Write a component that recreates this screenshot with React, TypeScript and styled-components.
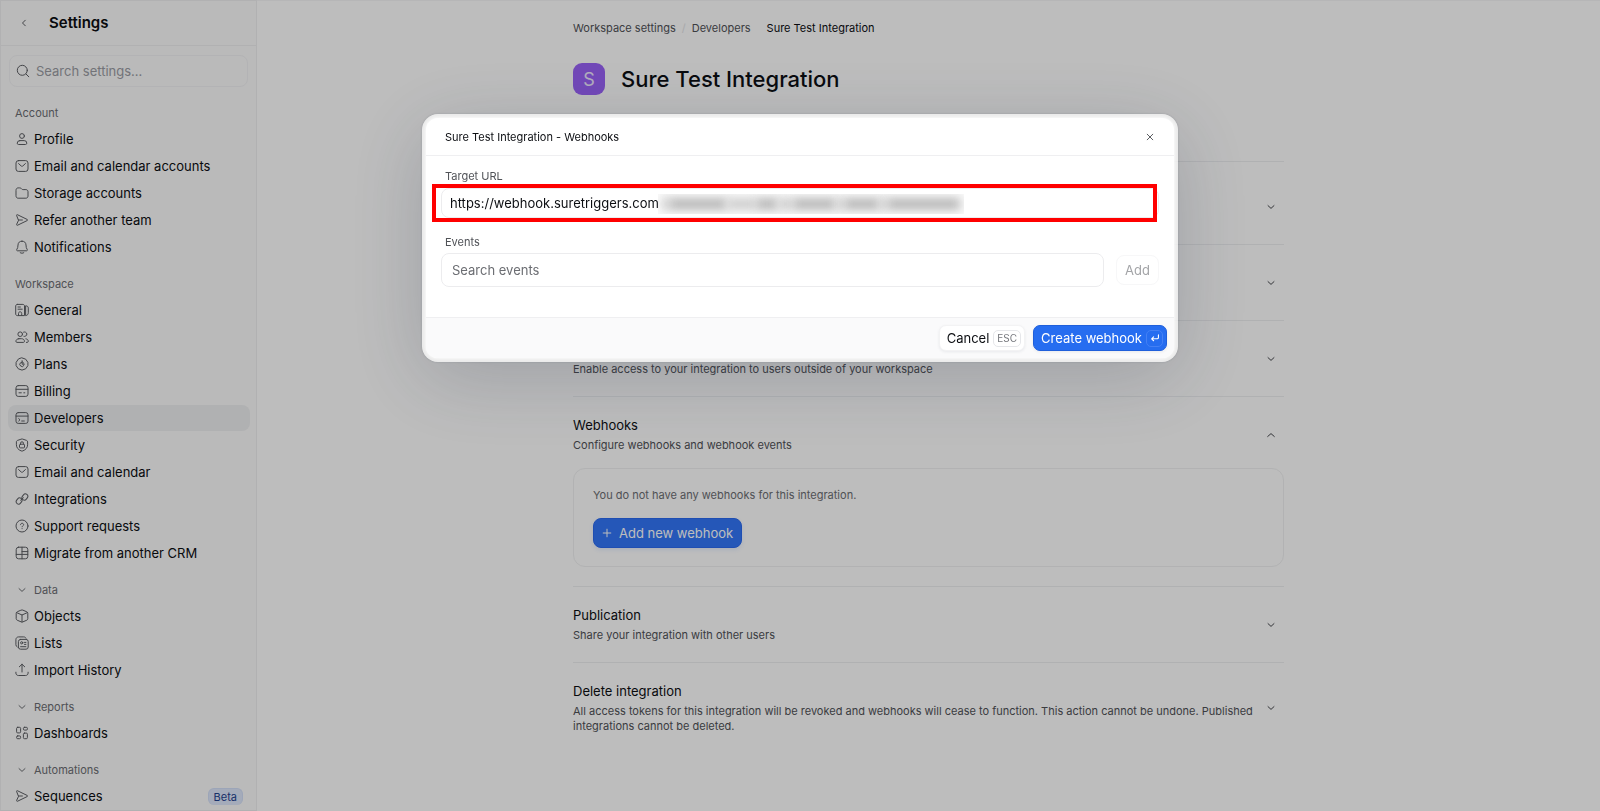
import React from "react";
import styled, { createGlobalStyle, css } from "styled-components";

const GlobalStyle = createGlobalStyle`
  * { box-sizing: border-box; }
  html, body, #root { height: 100%; }
  body {
    margin: 0;
    background: #ffffff;
    color: #0c0e12;
    font-family: Inter, "Liberation Sans", sans-serif;
    font-size: 13px;
    overflow: hidden;
  }
  button, input { font: inherit; color: inherit; }
  button { cursor: pointer; }
  a { color: inherit; text-decoration: none; }
  h1, h2, h3, p, ul, ol { margin: 0; padding: 0; font-weight: inherit; font-size: inherit; }
  ul, ol { list-style: none; }
`;

/* ---------- icons ---------- */

const Svg = styled.svg`
  display: block;
  flex: none;
  fill: none;
  stroke: currentColor;
  stroke-width: 1;
  stroke-linecap: round;
  stroke-linejoin: round;
`;

const shapes = {
  profile: (
    <>
      <circle cx="7" cy="4" r="2.4" />
      <path d="M4.8 8.6h4.4a2.6 2.6 0 0 1 2.6 2.6c0 .8-.6 1.3-1.3 1.3h-7c-.7 0-1.3-.5-1.3-1.3a2.6 2.6 0 0 1 2.6-2.6z" />
    </>
  ),
  mail: (
    <>
      <rect x="1" y="1.6" width="12" height="10.8" rx="2.4" />
      <path d="M3.6 4.6l2.5 2.3c.5.5 1.3.5 1.8 0l2.5-2.3" />
    </>
  ),
  folder: (
    <path d="M1 4c0-1.2.9-2.1 2.1-2.1h1.6c.6 0 1.1.2 1.5.6l.5.5c.4.4.8.6 1.4.6h2.8c1.2 0 2.1.9 2.1 2.1v4.4c0 1.2-.9 2.1-2.1 2.1H3.1C1.9 12.2 1 11.3 1 10.1z" />
  ),
  send: (
    <path d="M3.4 7H7.4M3.4 7L1.6 2.5c-.2-.6.3-1 .8-.8L12.3 6.5c.5.2.5.8 0 1L2.4 12.3c-.5.2-1-.2-.8-.8z" />
  ),
  bell: (
    <>
      <path d="M7 1.2a4 4 0 0 0-4 3.8L2.7 7.6 1.7 9.7c-.2.5.1 1.1.7 1.1h9.2c.6 0 .9-.6.7-1.100l-1-2.100L11 5a4 4 0 0 0-4-3.800z" />
      <path d="M5.200 12.700c1.100.7 2.500.7 3.600 0" />
    </>
  ),
  general: (
    <>
      <path d="M2.300 1.400h5.600c.9 0 1.600.7 1.600 1.600v9.600H2.300c-.9 0-1.600-.7-1.600-1.600V3c0-.9.700-1.600 1.600-1.600z" />
      <path d="M11 2.800c1.400 0 2.300.9 2.300 2.300v4.600c0 1.600-.9 2.700-2.300 2.900z" />
      <path d="M3 4h2.400M3 6.200h4.200M3.500 12.400v-2c0-.9.700-1.600 1.600-1.600s1.600.7 1.600 1.600v2" />
    </>
  ),
  members: (
    <>
      <circle cx="5.200" cy="4.200" r="2.300" />
      <path d="M3.800 8.700h2.800c1.600 0 2.900 1.200 2.900 2.600 0 .6-.5 1.100-1.100 1.100H2c-.6 0-1.100-.5-1.100-1.100 0-1.400 1.300-2.600 2.900-2.600zM8.600 2.100a2.300 2.300 0 1 1 .3 4.300M10.900 8.800c1.400.2 2.400 1.200 2.400 2.500 0 .6-.5 1.100-1.100 1.100h-.8" />
    </>
  ),
  plans: (
    <>
      <path d="M7 .9l3.700 1.300 2.200 3.200v3.200l-2.200 3.200L7 13.100l-3.700-1.300-2.200-3.200V5.400l2.200-3.200z" />
      <path d="M9 6.300A2.200 2.200 0 1 0 9 8.400M7.100 3.700v3.500h2" />
    </>
  ),
  billing: (
    <>
      <rect x="1" y="1.600" width="12" height="10.800" rx="2.200" />
      <path d="M1 5.300h12M4 8.800h2.300M8.800 8.800h1" />
    </>
  ),
  terminal: (
    <>
      <rect x="1" y="1.600" width="12" height="10.800" rx="2.200" />
      <path d="M1 5.100h12M3.700 7.600l1.300 1.200-1.300 1.200M6.700 10h2.600" />
    </>
  ),
  shield: (
    <>
      <path d="M6.300 1.100c.5-.2.900-.2 1.400 0l3.800 1.300c.7.200 1.100.8 1.100 1.500v2.900c0 2.900-1.900 4.900-4.700 6.100-.6.200-1.200.2-1.800 0C3.300 11.700 1.400 9.700 1.400 6.800V3.900c0-.7.400-1.300 1.100-1.500z" />
      <rect x="4.500" y="6.200" width="5" height="3.700" rx=".9" />
      <path d="M5.500 6.200v-.9a1.500 1.500 0 0 1 3 0v.9" />
    </>
  ),
  link: (
    <>
      <rect x="0.900" y="6.600" width="6.400" height="4.800" rx="2.400" transform="rotate(-52 4.100 9)" />
      <rect x="6.700" y="2.600" width="6.400" height="4.800" rx="2.400" transform="rotate(-52 9.900 5)" />
      <path d="M5.600 8.200l2.800-2.400" />
    </>
  ),
  help: (
    <>
      <circle cx="7" cy="7" r="6" />
      <path d="M5.500 5.700c.1-.9.800-1.400 1.600-1.400s1.500.6 1.500 1.400c0 1-1.500 1.100-1.500 2.100M7.100 9.600v.1" />
    </>
  ),
  grid: (
    <>
      <rect x="1.200" y="1.200" width="11.600" height="11.600" rx="2.400" />
      <path d="M7 1.200v11.600M7 5.600h5.800M1.200 8.400h11.600" />
    </>
  ),
  cube: (
    <path d="M6.200 1.100c.5-.2 1.100-.2 1.600 0l4 1.700c.6.300 1 .8 1 1.500v5.400c0 .7-.4 1.200-1 1.500l-4 1.700c-.5.200-1.100.2-1.600 0l-4-1.700c-.6-.3-1-.8-1-1.500V4.300c0-.7.400-1.200 1-1.500zM1.600 3.600L7 6l5.400-2.400M7 6v7" />
  ),
  list: (
    <>
      <rect x="3.400" y="3.400" width="9.800" height="9.800" rx="2.200" />
      <path d="M2.200 11A2.600 2.600 0 0 1 .9 8.700V3.500C.9 2.100 2.100.9 3.500.9h5.200c1 0 1.900.5 2.300 1.300" />
      <circle cx="6.700" cy="6.800" r="1.100" />
      <path d="M9.500 6.400h1.400M9.500 8.400h1.400M5.600 10.700h5.300" />
    </>
  ),
  upload: (
    <path d="M7 9V1.200M4.300 3.800L7 1.200l2.700 2.600M.9 9.200v.9c0 1.300 1.100 2.400 2.400 2.400h7.400c1.300 0 2.400-1.100 2.400-2.400v-.9" />
  ),
  dashboards: (
    <>
      <rect x="1.600" y="1.300" width="4" height="5.600" rx="1.100" />
      <rect x="8.400" y="1.300" width="4" height="2.800" rx="1.100" />
      <rect x="1.600" y="9.900" width="4" height="2.800" rx="1.100" />
      <rect x="8.400" y="7.100" width="4" height="5.600" rx="1.100" />
    </>
  ),
  search: (
    <>
      <circle cx="6.300" cy="6.300" r="5" />
      <path d="M10 10l2.800 2.800" />
    </>
  ),
  left: <path d="M8.300 4.200L5.500 7l2.800 2.800" />,
  down: <path d="M4 5.600l3 2.800 3-2.800" />,
  up: <path d="M3.700 8.500L7 5.600l3.300 2.900" />,
  close: <path d="M4.200 4.200l5.600 5.600M9.800 4.200L4.200 9.800" />,
  plus: <path d="M7 3.200v7.600M3.200 7h7.600" />,
  enter: <path d="M11 3.400v3c0 .9-.6 1.500-1.500 1.500H3.200M5.400 5.600L3.100 7.900l2.300 2.300" strokeWidth="1.300" />,
};

type IconName = keyof typeof shapes;

const Icon = ({ name, size = 14 }: { name: IconName; size?: number }) => (
  <Svg viewBox="0 0 14 14" width={size} height={size} aria-hidden="true">
    {shapes[name]}
  </Svg>
);

/* ---------- shell ---------- */

const Shell = styled.div`
  display: flex;
  height: 100%;
  overflow: hidden;
`;

const Sidebar = styled.nav`
  width: 257px;
  flex: none;
  overflow: hidden;
  background: #fbfbfb;
  border: 1px solid #efeff1;
`;

const SidebarHeader = styled.header`
  display: flex;
  align-items: center;
  gap: 11px;
  height: 45px;
  padding: 0 9px;
  border-bottom: 1px solid #efeff1;
`;

const BackButton = styled.button`
  display: grid;
  place-items: center;
  width: 28px;
  height: 28px;
  padding: 0;
  border: 0;
  background: none;
  color: #5c5e63;
`;

const SidebarTitle = styled.h2`
  font-size: 15px;
  line-height: 18px;
  font-weight: 600;
`;

const SearchBox = styled.label`
  display: flex;
  align-items: center;
  gap: 6px;
  height: 32px;
  margin: 9px 8px 18px;
  padding: 0 6px;
  border: 1px solid #f2f2f4;
  border-radius: 8px;
  color: #5c5e63;
`;

const SearchInput = styled.input`
  flex: 1;
  min-width: 0;
  padding: 0;
  border: 0;
  outline: 0;
  background: none;
  &::placeholder { color: #9a9ca3; opacity: 1; }
`;

const Group = styled.section`
  margin: 0 6px 16px 7px;
`;

const GroupLabel = styled.h3`
  display: flex;
  align-items: center;
  gap: 5px;
  height: 16px;
  margin-bottom: 5px;
  padding: 0 7px;
  font-size: 11px;
  color: #6c6e73;
`;

const NavList = styled.ul`
  display: grid;
  gap: 1px;
`;

const NavLink = styled.a<{ $active?: boolean }>`
  display: flex;
  align-items: center;
  gap: 5px;
  height: 26px;
  padding: 0 7px;
  border-radius: 8px;
  background: ${(p) => (p.$active ? "#eeeff1" : "transparent")};
  svg { color: #5c5e63; }
`;

const Beta = styled.span`
  margin-left: auto;
  padding: 0 5px;
  border: 1px solid #d3dff8;
  border-bottom: 0;
  border-radius: 6px;
  background: #dde7fb;
  color: #1f4390;
  font-size: 11px;
  line-height: 16px;
`;

/* ---------- page ---------- */

const Main = styled.main`
  flex: 1;
  min-width: 0;
  padding: 19px 16px;
  border-top: 1px solid #f6f6f7;
`;

const Column = styled.div`
  max-width: 711px;
  margin: 0 auto;
`;

const Crumbs = styled.ol`
  display: flex;
  gap: 16px;
  font-size: 11px;
  line-height: 16px;
  color: #505257;
`;

const Crumb = styled.li<{ $current?: boolean }>`
  position: relative;
  color: ${(p) => (p.$current ? "#0c0e12" : "inherit")};
  & + &::before {
    content: "/";
    position: absolute;
    left: -10px;
    color: #e3e4e7;
  }
`;

const TitleRow = styled.div`
  display: flex;
  align-items: center;
  gap: 16px;
  margin: 27px 0 66px;
`;

const Avatar = styled.span`
  display: grid;
  place-items: center;
  width: 32px;
  height: 32px;
  border-radius: 9px;
  background: #9a62f9;
  color: #f0eaff;
  font-size: 18px;
`;

const PageTitle = styled.h1`
  font-size: 22px;
  line-height: 32px;
  font-weight: 500;
`;

const Section = styled.section<{ $tall?: boolean }>`
  border-top: 1px solid #eeeff1;
  padding: ${(p) => (p.$tall ? "26px" : "19px")} 0 19px;
`;

const SectionHeader = styled.button`
  display: flex;
  align-items: center;
  justify-content: space-between;
  gap: 8px;
  width: 100%;
  padding: 0 6px 0 0;
  border: 0;
  background: none;
  text-align: left;
  svg { color: #45474c; }
`;

const SectionText = styled.span`
  display: grid;
  gap: 4px;
`;

const SectionTitle = styled.span`
  min-height: 18px;
  line-height: 18px;
`;

const SectionNote = styled.span`
  min-height: 15px;
  font-size: 11px;
  line-height: 15px;
  color: #505257;
`;

const Card = styled.div`
  display: grid;
  justify-items: start;
  gap: 15px;
  margin-top: 15px;
  padding: 18px 19px;
  border: 1px solid #f0f1f2;
  border-radius: 12px;
`;

const CardText = styled.p`
  font-size: 11px;
  line-height: 16px;
  color: #6c6e73;
`;

const primary = css`
  border: 1px solid #1f5fdb;
  background: #266df0;
  color: #ffffff;
`;

const AddWebhook = styled.button`
  ${primary}
  display: flex;
  align-items: center;
  gap: 5px;
  height: 30px;
  padding: 0 8px 0 6px;
  border-color: #2b6af0;
  border-radius: 8px;
  background: #3376f8;
  box-shadow: 0 2px 4px rgba(38, 109, 240, 0.12);
`;

/* ---------- dialog ---------- */

const Overlay = styled.div`
  position: fixed;
  inset: 0;
  display: flex;
  justify-content: center;
  align-items: flex-start;
  padding: 114px 16px 16px;
  background: rgba(0, 0, 0, 0.26);
`;

const Frame = styled.div`
  width: 100%;
  max-width: 756px;
  padding: 4px;
  border-radius: 16px;
  background: rgba(255, 255, 255, 0.68);
  box-shadow: 0 0 2px rgba(28, 40, 64, 0.2), 0 16px 80px rgba(28, 40, 64, 0.2);
`;

const Dialog = styled.div`
  overflow: hidden;
  border-radius: 12px;
  background: #ffffff;
  box-shadow: 0 0 3px 1px rgba(255, 255, 255, 0.8);
`;

const DialogHeader = styled.header`
  display: flex;
  align-items: center;
  justify-content: space-between;
  height: 38px;
  padding: 0 17px 0 19px;
  border-bottom: 1px solid #efeff1;
  font-size: 11px;
`;

const CloseButton = styled.button`
  display: grid;
  padding: 0;
  border: 0;
  background: none;
  color: #5c5e63;
`;

const DialogBody = styled.div`
  padding: 12px 15px 30px;
`;

const FieldLabel = styled.label`
  display: block;
  padding-left: 4px;
  font-size: 11px;
  line-height: 16px;
  color: #505257;
`;

const UrlField = styled.div`
  position: relative;
  margin: 4px 0 16px;
`;

const Highlight = styled.div`
  position: absolute;
  inset: -4px 2px -4px -9px;
  border: 4px solid #ff0000;
  pointer-events: none;
`;

const TextInput = styled.input`
  width: 100%;
  height: 34px;
  padding: 0 10px;
  border: 1px solid #ececee;
  border-radius: 8px;
  outline: 0;
  background: #ffffff;
  &::placeholder { color: #6b6d72; opacity: 1; }
`;

const UrlInput = styled(TextInput)`
  display: block;
  height: 30px;
  padding: 0 8px;
`;

const Redaction = styled.div`
  position: absolute;
  top: 6px;
  left: 217px;
  display: flex;
  width: 306px;
  height: 20px;
  padding: 4px 4px;
  overflow: hidden;
  background: #fafafa;
`;

const Smudge = styled.span<{ $grow: number; $faint: boolean }>`
  flex: ${(p) => p.$grow};
  background: ${(p) => (p.$faint ? "#cfcfcf" : "#b9b9b9")};
  filter: blur(5px);
`;

const EventRow = styled.div`
  display: flex;
  align-items: center;
  gap: 12px;
  margin-top: 3px;
`;

const AddButton = styled.button`
  flex: none;
  width: 43px;
  height: 30px;
  padding: 0;
  border: 1px solid #f7f7f8;
  border-radius: 8px;
  background: #ffffff;
  color: #a3a4a7;
`;

const DialogFooter = styled.footer`
  display: flex;
  justify-content: flex-end;
  gap: 8px;
  padding: 7px;
  border-top: 1px solid #efeff1;
  background: #fafafb;
`;

const FooterButton = styled.button<{ $primary?: boolean }>`
  display: flex;
  align-items: center;
  gap: 4px;
  height: 26px;
  padding: 0 3px 0 7px;
  border: 1px solid #f3f3f4;
  border-radius: 7px;
  background: #ffffff;
  box-shadow: 0 1px 3px rgba(28, 40, 64, 0.08);
  ${(p) => p.$primary && primary}
`;

const KeyCap = styled.kbd<{ $primary?: boolean }>`
  display: grid;
  place-items: center;
  height: 17px;
  min-width: 17px;
  padding: 0 ${(p) => (p.$primary ? "0" : "3px")};
  border: 1px solid ${(p) => (p.$primary ? "#4480f4" : "#e6e7ea")};
  border-radius: 5px;
  color: ${(p) => (p.$primary ? "#ffffff" : "#75777c")};
  font-family: inherit;
  font-size: 10px;
`;

/* ---------- content ---------- */

type Item = { icon: IconName; label: string; active?: boolean; beta?: boolean };
type NavGroup = { label: string; folds?: boolean; items: Item[] };

const groups: NavGroup[] = [
  {
    label: "Account",
    items: [
      { icon: "profile", label: "Profile" },
      { icon: "mail", label: "Email and calendar accounts" },
      { icon: "folder", label: "Storage accounts" },
      { icon: "send", label: "Refer another team" },
      { icon: "bell", label: "Notifications" },
    ],
  },
  {
    label: "Workspace",
    items: [
      { icon: "general", label: "General" },
      { icon: "members", label: "Members" },
      { icon: "plans", label: "Plans" },
      { icon: "billing", label: "Billing" },
      { icon: "terminal", label: "Developers", active: true },
      { icon: "shield", label: "Security" },
      { icon: "mail", label: "Email and calendar" },
      { icon: "link", label: "Integrations" },
      { icon: "help", label: "Support requests" },
      { icon: "grid", label: "Migrate from another CRM" },
    ],
  },
  {
    label: "Data",
    folds: true,
    items: [
      { icon: "cube", label: "Objects" },
      { icon: "list", label: "Lists" },
      { icon: "upload", label: "Import History" },
    ],
  },
  { label: "Reports", folds: true, items: [{ icon: "dashboards", label: "Dashboards" }] },
  { label: "Automations", folds: true, items: [{ icon: "send", label: "Sequences", beta: true }] },
];

type PanelProps = {
  title?: string;
  note?: string;
  open?: boolean;
  tall?: boolean;
  children?: React.ReactNode;
};

const Panel = ({ title, note, open = false, tall, children }: PanelProps) => (
  <Section $tall={tall}>
    <SectionHeader type="button" aria-expanded={open}>
      <SectionText>
        <SectionTitle>{title}</SectionTitle>
        <SectionNote>{note}</SectionNote>
      </SectionText>
      <Icon name={open ? "up" : "down"} />
    </SectionHeader>
    {children}
  </Section>
);

const smudges = [1, 8, 4, 3, 2, 6, 1, 5, 1, 10];

export default function App() {
  return (
    <>
      <GlobalStyle />
      <Shell>
        <Sidebar>
          <SidebarHeader>
            <BackButton type="button" aria-label="Back">
              <Icon name="left" />
            </BackButton>
            <SidebarTitle>Settings</SidebarTitle>
          </SidebarHeader>
          <SearchBox>
            <Icon name="search" />
            <SearchInput placeholder="Search settings..." />
          </SearchBox>
          {groups.map((group) => (
            <Group key={group.label}>
              <GroupLabel>
                {group.folds && <Icon name="down" />}
                {group.label}
              </GroupLabel>
              <NavList>
                {group.items.map((item) => (
                  <li key={item.label}>
                    <NavLink href="#" $active={item.active}>
                      <Icon name={item.icon} />
                      {item.label}
                      {item.beta && <Beta>Beta</Beta>}
                    </NavLink>
                  </li>
                ))}
              </NavList>
            </Group>
          ))}
        </Sidebar>

        <Main>
          <Column>
            <Crumbs>
              <Crumb><a href="#">Workspace settings</a></Crumb>
              <Crumb><a href="#">Developers</a></Crumb>
              <Crumb $current>Sure Test Integration</Crumb>
            </Crumbs>
            <TitleRow>
              <Avatar>S</Avatar>
              <PageTitle>Sure Test Integration</PageTitle>
            </TitleRow>
            <Panel tall />
            <Panel />
            <Panel note="Enable access to your integration to users outside of your workspace" />
            <Panel title="Webhooks" note="Configure webhooks and webhook events" open>
              <Card>
                <CardText>You do not have any webhooks for this integration.</CardText>
                <AddWebhook type="button">
                  <Icon name="plus" />
                  Add new webhook
                </AddWebhook>
              </Card>
            </Panel>
            <Panel title="Publication" note="Share your integration with other users" />
            <Panel
              title="Delete integration"
              note="All access tokens for this integration will be revoked and webhooks will cease to function. This action cannot be undone. Published integrations cannot be deleted."
            />
          </Column>
        </Main>
      </Shell>

      <Overlay>
        <Frame role="dialog" aria-modal="true" aria-labelledby="dialog-title">
          <Dialog>
            <DialogHeader>
              <h2 id="dialog-title">Sure Test Integration - Webhooks</h2>
              <CloseButton type="button" aria-label="Close">
                <Icon name="close" />
              </CloseButton>
            </DialogHeader>
            <DialogBody>
              <FieldLabel htmlFor="target-url">Target URL</FieldLabel>
              <UrlField>
                <UrlInput id="target-url" defaultValue="https://webhook.suretriggers.com" />
                <Redaction>
                  {smudges.map((grow, i) => (
                    <Smudge key={i} $grow={grow} $faint={i % 2 === 0} />
                  ))}
                </Redaction>
                <Highlight />
              </UrlField>
              <FieldLabel htmlFor="events">Events</FieldLabel>
              <EventRow>
                <TextInput id="events" placeholder="Search events" />
                <AddButton type="button">Add</AddButton>
              </EventRow>
            </DialogBody>
            <DialogFooter>
              <FooterButton type="button">
                Cancel <KeyCap>ESC</KeyCap>
              </FooterButton>
              <FooterButton type="button" $primary>
                Create webhook
                <KeyCap $primary>
                  <Icon name="enter" size={12} />
                </KeyCap>
              </FooterButton>
            </DialogFooter>
          </Dialog>
        </Frame>
      </Overlay>
    </>
  );
}
